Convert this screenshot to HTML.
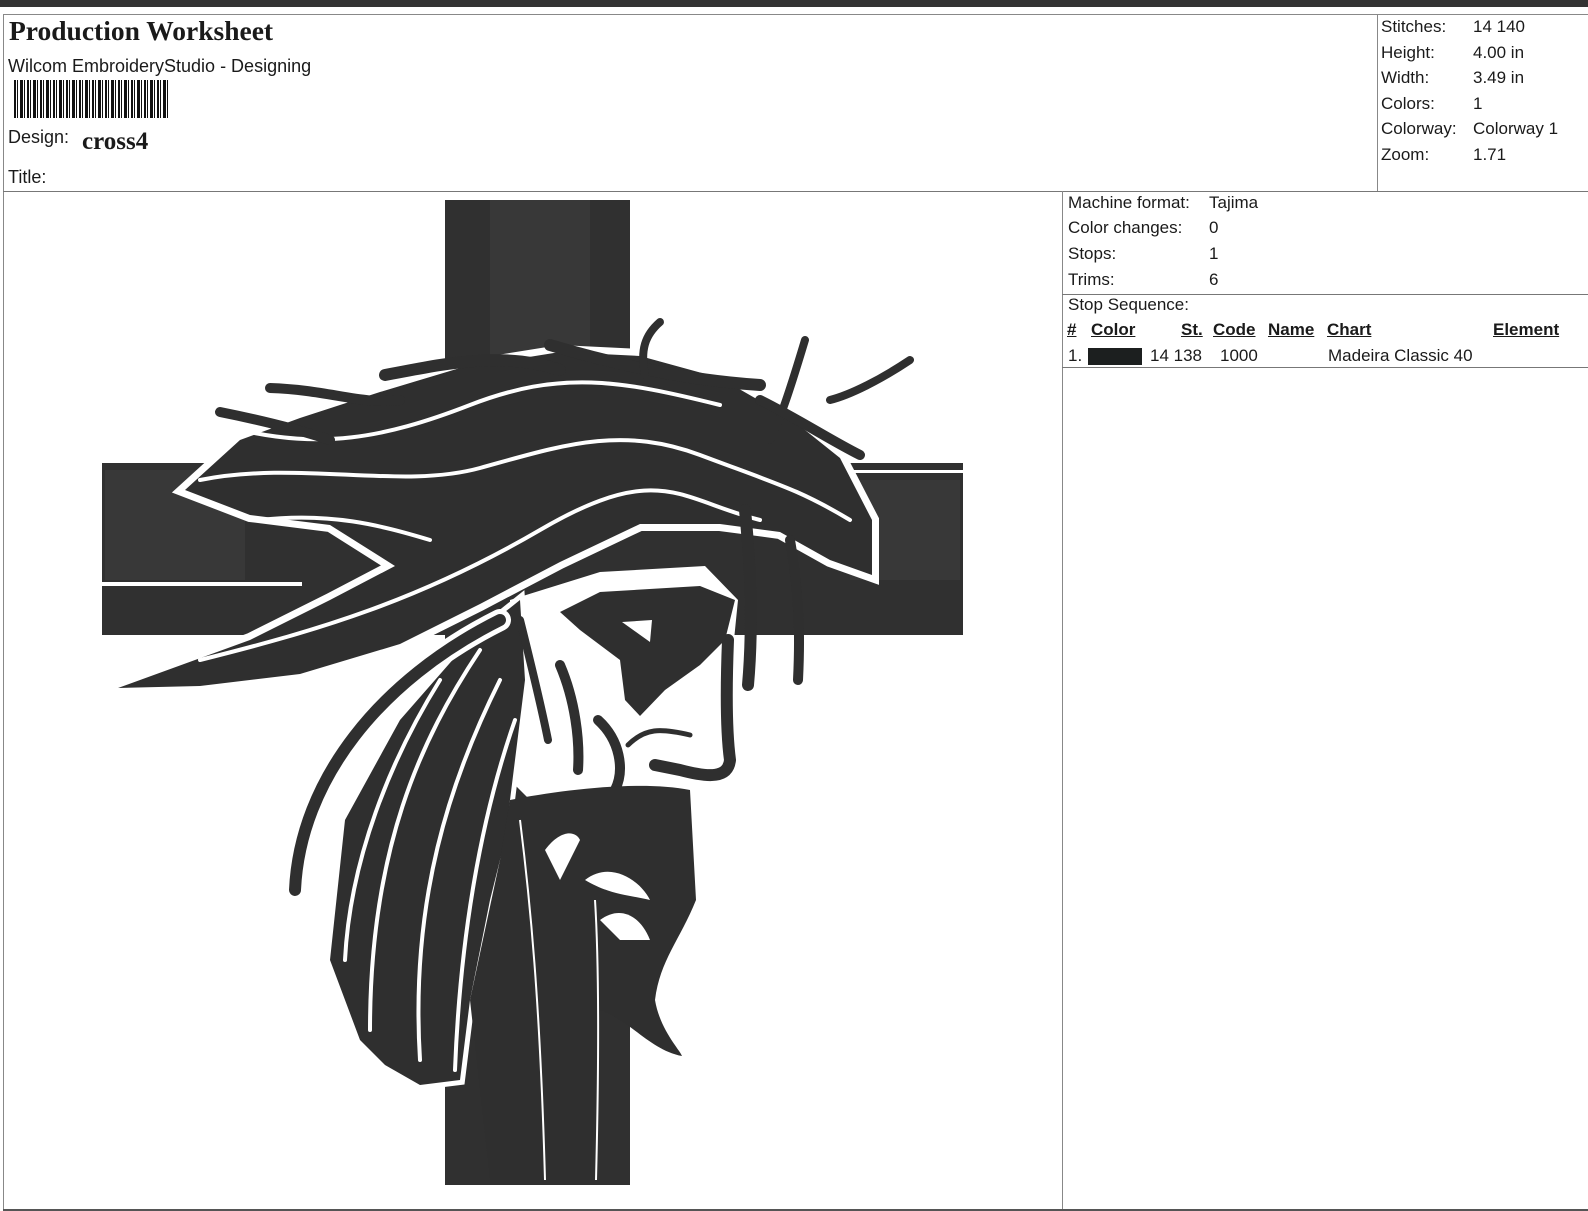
<!DOCTYPE html>
<html><head><meta charset="utf-8"><style>
*{margin:0;padding:0;box-sizing:border-box}
body{width:1588px;height:1211px;background:#fff;position:relative;overflow:hidden;font-family:"Liberation Sans",Arial,sans-serif;color:#1a1a1a}
.a{position:absolute;white-space:nowrap}
.s{font-size:17px}
.serif{font-family:"Liberation Serif",serif;font-weight:bold}
.hl{position:absolute;background:#777;height:1px}
.vl{position:absolute;background:#888;width:1px}
u{text-decoration:underline}
</style></head><body>
<div style="position:absolute;left:0;top:0;width:1588px;height:7px;background:#333"></div>
<div class="hl" style="left:3px;top:14px;width:1585px;background:#888"></div>
<div class="vl" style="left:3px;top:14px;height:1196px"></div>
<div class="hl" style="left:3px;top:191px;width:1585px"></div>
<div class="vl" style="left:1377px;top:14px;height:177px"></div>
<div class="vl" style="left:1062px;top:191px;height:1020px"></div>
<div class="hl" style="left:1062px;top:294px;width:526px"></div>
<div class="hl" style="left:1062px;top:367px;width:526px"></div>
<div class="hl" style="left:3px;top:1209px;width:1585px;height:2px;background:#555"></div>

<div class="a serif" style="left:9px;top:15px;font-size:27.5px">Production Worksheet</div>
<div class="a" style="left:8px;top:56px;font-size:18px">Wilcom EmbroideryStudio - Designing</div>
<div class="a" style="left:14px;top:80px;height:38px;width:155px;background:repeating-linear-gradient(90deg,#111 0 2px,#fff 2px 3px,#111 3px 4px,#fff 4px 6px,#111 6px 9px,#fff 9px 10px,#111 10px 11px,#fff 11px 13px)"></div>
<div class="a" style="left:8px;top:127px;font-size:18px">Design:</div>
<div class="a serif" style="left:82px;top:128px;font-size:25px">cross4</div>
<div class="a" style="left:8px;top:167px;font-size:18px">Title:</div>

<div class="a s" style="left:1381px;top:17px">Stitches:</div><div class="a s" style="left:1473px;top:17px">14 140</div>
<div class="a s" style="left:1381px;top:43px">Height:</div><div class="a s" style="left:1473px;top:43px">4.00 in</div>
<div class="a s" style="left:1381px;top:68px">Width:</div><div class="a s" style="left:1473px;top:68px">3.49 in</div>
<div class="a s" style="left:1381px;top:94px">Colors:</div><div class="a s" style="left:1473px;top:94px">1</div>
<div class="a s" style="left:1381px;top:119px">Colorway:</div><div class="a s" style="left:1473px;top:119px">Colorway 1</div>
<div class="a s" style="left:1381px;top:145px">Zoom:</div><div class="a s" style="left:1473px;top:145px">1.71</div>

<div class="a s" style="left:1068px;top:193px">Machine format:</div><div class="a s" style="left:1209px;top:193px">Tajima</div>
<div class="a s" style="left:1068px;top:218px">Color changes:</div><div class="a s" style="left:1209px;top:218px">0</div>
<div class="a s" style="left:1068px;top:244px">Stops:</div><div class="a s" style="left:1209px;top:244px">1</div>
<div class="a s" style="left:1068px;top:270px">Trims:</div><div class="a s" style="left:1209px;top:270px">6</div>
<div class="a s" style="left:1068px;top:295px">Stop Sequence:</div>
<div class="a s" style="left:1067px;top:320px;font-weight:bold"><u>#</u></div>
<div class="a s" style="left:1091px;top:320px;font-weight:bold"><u>Color</u></div>
<div class="a s" style="left:1181px;top:320px;font-weight:bold"><u>St.</u></div>
<div class="a s" style="left:1213px;top:320px;font-weight:bold"><u>Code</u></div>
<div class="a s" style="left:1268px;top:320px;font-weight:bold"><u>Name</u></div>
<div class="a s" style="left:1327px;top:320px;font-weight:bold"><u>Chart</u></div>
<div class="a s" style="left:1493px;top:320px;font-weight:bold"><u>Element</u></div>
<div class="a s" style="left:1068px;top:346px">1.</div>
<div class="a" style="left:1088px;top:348px;width:54px;height:17px;background:#1c1f1f"></div>
<div class="a s" style="left:1150px;top:346px">14 138</div>
<div class="a s" style="left:1220px;top:346px">1000</div>
<div class="a s" style="left:1328px;top:346px">Madeira Classic 40</div>

<svg class="a" style="left:0;top:0" width="1062" height="1209" viewBox="0 0 1062 1209">
<g fill="#303030">
<rect x="445" y="200" width="185" height="985"/>
<rect x="102" y="463" width="861" height="172"/>
</g>
<g fill="#383838"><rect x="490" y="200" width="100" height="160"/><rect x="105" y="470" width="140" height="110"/><rect x="850" y="480" width="110" height="100"/><rect x="490" y="1030" width="100" height="150"/></g>
<rect x="102" y="582" width="200" height="4" fill="#fff"/>
<rect x="800" y="470" width="163" height="3" fill="#fff"/>
<path d="M185 490 L240 440 L300 418 L380 392 L460 368 L560 352 L640 356 L720 378 L790 418 L840 458 L872 520 L872 575 L830 560 L780 532 L720 524 L640 524 L560 562 L480 604 L400 644 L300 674 L200 686 L118 688 L250 640 L330 600 L395 566 L330 525 L250 515 Z" fill="#fff" stroke="#fff" stroke-width="14"/>
<path d="M185 490 L240 440 L300 418 L380 392 L460 368 L560 352 L640 356 L720 378 L790 418 L840 458 L872 520 L872 575 L830 560 L780 532 L720 524 L640 524 L560 562 L480 604 L400 644 L300 674 L200 686 L118 688 L250 640 L330 600 L395 566 L330 525 L250 515 Z" fill="#2f2f2f"/>
<path d="M510 600 L600 572 L705 566 L738 600 L734 640 L732 770 L700 782 L660 790 L620 800 L560 830 L510 780 Z" fill="#fff"/>
<path d="M520 600 L470 640 L400 720 L345 820 L330 960 L360 1040 L385 1065 L420 1085 L460 1080 L470 1000 L490 900 L505 840 L515 760 L525 680 Z" fill="#fff" stroke="#fff" stroke-width="10"/>
<path d="M520 600 L470 640 L400 720 L345 820 L330 960 L360 1040 L385 1065 L420 1085 L460 1080 L470 1000 L490 900 L505 840 L515 760 L525 680 Z" fill="#2f2f2f"/>
<g fill="none" stroke-linecap="round" stroke-linejoin="round">
<g stroke="#fff" stroke-width="4">
<path d="M200 480 C300 460 400 490 480 468 S620 425 700 455 S800 490 850 520"/>
<path d="M240 430 C320 448 380 440 470 405 S620 380 720 405"/>
<path d="M260 520 C330 512 380 525 430 540"/>
<path d="M200 660 C320 630 420 600 540 530 S680 500 760 520"/>
<path d="M480 650 C420 740 370 850 370 1030"/>
<path d="M500 680 C450 780 410 900 420 1060"/>
<path d="M440 680 C390 760 350 860 345 960"/>
<path d="M515 720 C480 820 460 940 455 1070"/>
</g>
<g stroke="#fff" stroke-width="22">
<path d="M500 620 C380 680 300 780 295 890"/>
</g>
<g stroke="#2f2f2f">
<path stroke-width="12" d="M500 620 C380 680 300 780 295 890"/>
<path stroke-width="10" d="M270 388 C330 390 360 405 400 400"/>
<path stroke-width="12" d="M385 375 C440 365 500 350 560 370"/>
<path stroke-width="12" d="M550 345 C600 360 680 380 760 385"/>
<path stroke-width="10" d="M220 412 C260 420 300 430 330 440"/>
<path stroke-width="8" d="M660 322 C645 335 640 350 645 375"/>
<path stroke-width="8" d="M805 340 C790 390 780 420 770 440"/>
<path stroke-width="8" d="M910 360 C880 380 850 395 830 400"/>
<path stroke-width="10" d="M760 400 C800 420 830 440 860 455"/>
<path stroke-width="12" d="M745 510 C752 580 752 640 748 685"/>
<path stroke-width="10" d="M790 540 C800 600 800 640 798 680"/>
<path stroke-width="8" d="M520 620 C530 660 540 700 548 740"/>
<path stroke-width="10" d="M560 665 C575 700 580 740 578 770"/>
<path stroke-width="10" d="M598 720 C620 740 625 770 615 790"/>
<path stroke-width="12" d="M728 640 C726 690 726 730 730 760 C728 778 710 778 680 770 L655 765"/>
<path stroke-width="5" d="M628 745 C645 728 660 728 690 735"/>
</g>
</g>
<path d="M560 612 L600 592 L700 586 L735 600 L725 640 L700 665 L665 690 L640 716 L625 700 L620 660 L580 630 Z" fill="#2f2f2f"/>
<path d="M622 622 L652 620 L650 642 Z" fill="#fff"/>
<path d="M510 800 C560 790 640 780 690 790 L696 900 C680 940 660 960 655 1000 C660 1030 680 1050 682 1056 C650 1050 630 1020 600 1010 L590 1180 L490 1180 L470 1000 L500 860 Z" fill="#2f2f2f"/>
<g fill="#fff">
<path d="M585 880 C610 860 640 880 650 900 C630 895 610 895 585 880 Z"/>
<path d="M600 920 C620 905 640 915 650 940 L620 940 Z"/>
<path d="M545 850 C560 830 575 830 580 840 L560 880 Z"/>
</g>
<g fill="none" stroke="#fff" stroke-width="2"><path d="M520 820 C530 900 540 1000 545 1180"/><path d="M595 900 C600 980 598 1100 596 1180"/></g>
</svg>
</body></html>
